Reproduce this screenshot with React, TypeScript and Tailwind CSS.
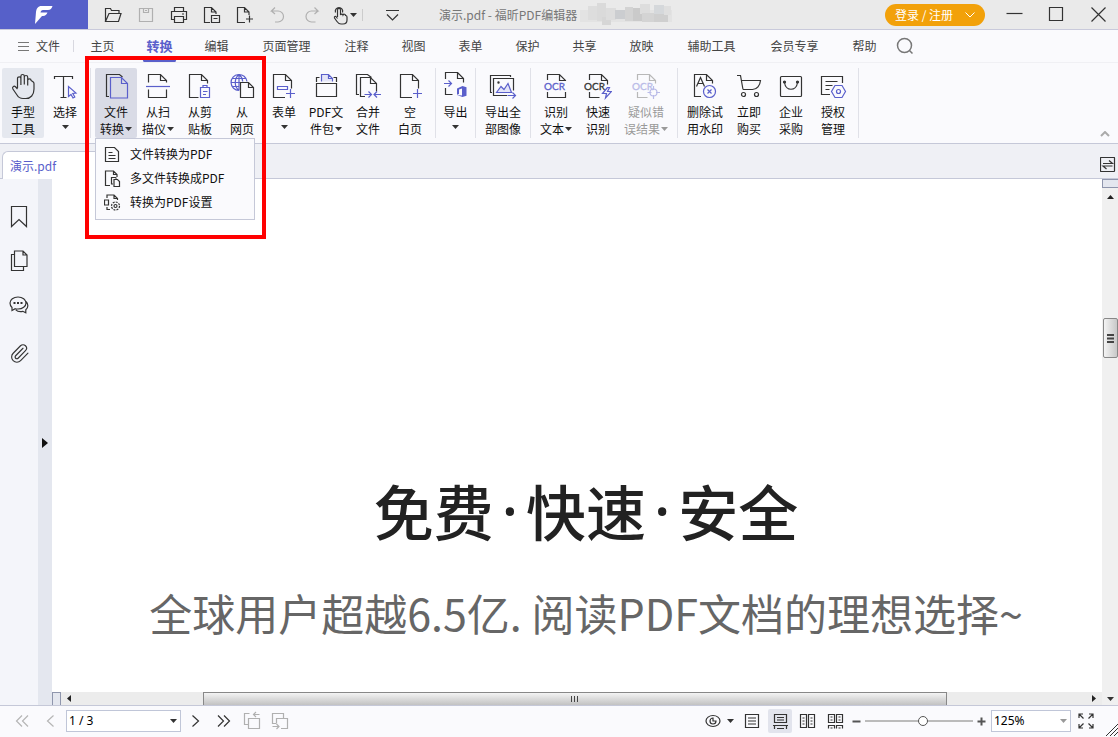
import { Paperclip } from "lucide-react";
import type { ReactNode } from "react";

const INK = "#333333";
const BLUE = "#5a5fcb";

type IconProps = {
  size?: number;
  color?: string;
  className?: string;
  children: ReactNode;
};

function Icon({ size = 28, color = INK, className = "", children }: IconProps) {
  return (
    <svg
      width={size}
      height={size}
      viewBox={`0 0 ${size} ${size}`}
      fill="none"
      stroke={color}
      strokeWidth="1.2"
      className={`shrink-0 ${className}`}
      aria-hidden="true"
    >
      {children}
    </svg>
  );
}

function Caret({ className = "text-[#333333]" }: { className?: string }) {
  return (
    <svg width="7" height="4" viewBox="0 0 7 4" className={`shrink-0 ${className}`} aria-hidden="true">
      <path d="M0 0h7L3.5 4z" fill="currentColor" />
    </svg>
  );
}

const titleTools = [
  {
    name: "打开",
    color: INK,
    art: <path d="M2.5 17.5v-13h5l1 2h7.500v3M2.500 17.500l3.500-8h12l-2.500 8z" />,
  },
  {
    name: "保存",
    color: "#b0b0b0",
    art: <path d="M3.500 4.500h13v13h-13zM7.500 4.500v4h5v-4M9 6.500h2" />,
  },
  {
    name: "打印",
    color: INK,
    art: <path d="M5.500 7.500v-4h9v4M5.500 15.500h-3v-8h15v8h-3M5.500 12.500h9v6h-9zM13 10h2" />,
  },
  {
    name: "另存",
    color: INK,
    art: <path d="M8 18.500H2.500v-15h7l4.500 4.500v2M9.500 3.500v4.500H14M9.500 11.500h8v7h-8zM11.500 14.500h4" />,
  },
  {
    name: "新建",
    color: INK,
    art: <path d="M10 18.500H2.500v-15h7l4.500 4.500v3M9.500 3.500v4.500H14M14.500 11.500v7M11 15h7" />,
  },
  {
    name: "撤销",
    color: "#b0b0b0",
    art: <path d="M7 3.500L3.500 7H10a5.500 5.500 0 0 1 0 11H7M3.500 7L7 10" />,
  },
  {
    name: "重做",
    color: "#b0b0b0",
    art: <path d="M13.500 3.500L17 7h-6.500a5.500 5.500 0 0 0 0 11h4M17 7l-3.500 3" />,
  },
];

// pixelated licence name after the window title
const mosaic = [
  [0, 8, 92, 12, "#e3e3e3"], [8, 4, 9, 14, "#dddddd"], [17, 1, 9, 18, "#dadada"], [22, 15, 9, 8, "#d6d6d6"],
  [26, 6, 10, 12, "#dddddd"], [35, 8, 12, 9, "#cbcdd0"], [45, 5, 8, 14, "#d3d3d3"], [53, 6, 9, 13, "#cacaca"],
  [60, 2, 10, 10, "#dddddd"], [62, 11, 12, 9, "#d4d4d4"], [74, 3, 10, 11, "#d5d8db"], [74, 12, 14, 8, "#cfcfcf"],
  [84, 4, 7, 9, "#dfdfdf"],
] as const;

function TitleBar() {
  return (
    <header className="flex h-[30px] shrink-0 items-center border-b border-[#c9cadb] bg-[#eaeaea]">
      <div className="flex h-full w-[88px] items-center justify-center bg-[#5660c9]">
        <svg width="20" height="20" viewBox="0 0 20 20" fill="#ffffff" role="img" aria-label="福昕">
          <path d="M1 19L2 7C2.500 3.500 4 1 7.500 1H18.500c-.800 2.500-2 4-4.500 4H9C7.500 5 6.800 6 6.500 7.500L13.500 7.500c-1 2.300-2.200 3.500-4.500 3.500H8z" />
        </svg>
      </div>
      <div className="flex items-center gap-3 pl-[15px]">
        {titleTools.map((t) => (
          <button key={t.name} aria-label={t.name}>
            <Icon size={21} color={t.color} className="block">{t.art}</Icon>
          </button>
        ))}
      </div>
      <button className="ml-2 flex items-center" aria-label="手型">
        <Icon size={20}>
          <path d="M7.500 12V5a1.500 1.500 0 0 1 3 0v5a1.300 1.300 0 0 1 2.500 0 1.300 1.300 0 0 1 2.500.500c1 0 1.500.500 1.500 1.500v3c0 2.500-1.500 4-4 4h-2c-2 0-3-1-4-2.500L4.500 13c-.500-1.500 1-2 1.800-1L7.500 13.500M5.500 7.500a3.700 3.700 0 1 1 7 0" />
        </Icon>
        <Caret />
      </button>
      <div className="ml-[5px] h-3 w-px bg-[#cccccc]" />
      <button className="ml-[19px]" aria-label="自定义快速访问">
        <Icon size={21} className="block"><path d="M4 6.500h13M5 10.500l5.500 5.500 5.500-5.500" /></Icon>
      </button>
      <h1 className="ml-9 text-xs text-[#777777]">演示.pdf - 福昕PDF编辑器</h1>
      <svg width="92" height="26" viewBox="0 0 92 26" className="ml-[3px]" aria-hidden="true">
        {mosaic.map(([x, y, w, h, fill]) => (
          <rect key={`${x}-${y}`} x={x} y={y} width={w} height={h} fill={fill} />
        ))}
      </svg>
      <button className="ml-auto flex h-[22px] w-[100px] items-center justify-between rounded-full bg-[#f2a10a] px-2.5 text-xs text-white">
        登录 / 注册
        <svg width="10" height="6" viewBox="0 0 10 6" fill="none" stroke="#ffffff" aria-hidden="true">
          <path d="M.500.500L5 5 9.500.500" />
        </svg>
      </button>
      <div className="flex items-center gap-[21px] pr-[9px] pl-[19px]">
        <button aria-label="最小化"><Icon size={21} className="block"><path d="M2.500 9.500h16" /></Icon></button>
        <button aria-label="最大化"><Icon size={21} className="block"><path d="M3.500 3.500h13v13h-13z" /></Icon></button>
        <button aria-label="关闭"><Icon size={21} className="block"><path d="M3.500 3.500l14 14M17.500 3.500l-14 14" /></Icon></button>
      </div>
    </header>
  );
}

const menus = ["主页", "转换", "编辑", "页面管理", "注释", "视图", "表单", "保护", "共享", "放映", "辅助工具", "会员专享", "帮助"];

function MenuBar() {
  return (
    <nav className="flex h-[33px] shrink-0 items-center border-b border-[#f0f0f4] text-xs text-[#444444]">
      <button className="flex w-[73px] items-center gap-[7px] pl-[18px]">
        <svg width="11" height="9" viewBox="0 0 11 9" stroke="#777777" aria-hidden="true">
          <path d="M0 .500h11M0 4.500h11M0 8.500h11" />
        </svg>
        文件
      </button>
      <div className="h-3 w-px bg-[#d8d8e0]" />
      {menus.map((m) => {
        const width = m.length > 2 ? "w-[83px]" : "w-[57px]";
        if (m === "转换") {
          return (
            <button key={m} className={`relative h-full ${width} text-[13px] font-bold text-[#5a5fcb]`}>
              {m}
              <span className="absolute inset-x-3 bottom-0 h-[3px] rounded-full bg-[#5a5fcb]" />
            </button>
          );
        }
        return <button key={m} className={`h-full ${width}`}>{m}</button>;
      })}
      <button className="ml-[3px]" aria-label="搜索">
        <Icon size={18} color="#777777" className="block">
          <circle cx="8.500" cy="8.500" r="7" strokeWidth="1.500" />
          <path d="M13.500 13.500l3 3" strokeWidth="1.500" />
        </Icon>
      </button>
    </nav>
  );
}

function Ocr({ x, color }: { x: number; color: string }) {
  return (
    <text x={x} y="18" fontFamily="Lato" fontSize="10" fontWeight="400" fill={color} stroke={color} strokeWidth=".3">
      OCR
    </text>
  );
}

type Tool = {
  top: string;
  bottom?: string;
  caret?: boolean;
  width?: string;
  state?: "on" | "open" | "off";
  art: ReactNode;
};

const groups: Tool[][] = [
  [
    {
      top: "手型",
      bottom: "工具",
      state: "on",
      art: (
        <path d="M8.500 16V6.500a1.700 1.700 0 0 1 3.400 0V13M11.900 12V4.200a1.700 1.700 0 0 1 3.400 0V12.500M15.300 12.500V5.200a1.700 1.700 0 0 1 3.400 0V13.500M18.700 13.500V8.500a1.700 1.700 0 0 1 3.400 0l2.200 1.500c.800.600.700 1.300.700 2v5c0 6-3.500 9.500-8 9.500h-3c-3 0-4.500-1-6-3.500L3.900 17c-1-2 1-3.600 2.600-2.200L8.500 17" />
      ),
    },
    {
      top: "选择",
      caret: true,
      art: (
        <>
          <path d="M3.500 7V4.500h18V7M12.500 4.500v21M9.500 25.500h6" />
          <path d="M17.500 14.500v10l2.500-2 2 3.500 1.800-1-2-3.500 3.200-.500z" stroke={BLUE} />
        </>
      ),
    },
  ],
  [
    {
      top: "文件",
      bottom: "转换",
      caret: true,
      state: "open",
      art: (
        <>
          <path d="M7 24.500H4.500v-22h13l3 2.500" />
          <path d="M8.500 5.500h11l6 6v14.500h-17zM19.500 5.500v6h6" stroke={BLUE} />
        </>
      ),
    },
    {
      top: "从扫",
      bottom: "描仪",
      caret: true,
      art: (
        <>
          <path d="M4.500 10.500v-8h12l6 6v2M16.500 2.500v6h6M4.500 17.500v8h18v-8" />
          <path d="M2 14.500h24" stroke={BLUE} />
        </>
      ),
    },
    {
      top: "从剪",
      bottom: "贴板",
      art: (
        <>
          <path d="M12.500 25.500h-9v-23h12l6 6v3M15.500 2.500v6h6" />
          <path d="M14.500 15.500h9v10h-9zM17 15.500v-2h4v2M17 19.500h4.500M17 22.500h3" stroke={BLUE} />
        </>
      ),
    },
    {
      top: "从",
      bottom: "网页",
      art: (
        <>
          <path
            d="M11 18.500a8 8 0 1 1 8-9M11 2.500v16M3 10.500h9M4.500 6.500h13.500M4.500 14.500h7M11 2.500c-5 4-5 12 0 16M11 2.500c2.500 2 3.500 4 3.700 7"
            stroke={BLUE}
          />
          <path d="M12.500 10.500h8l5 5v10h-13zM20.500 10.500v5h5" />
        </>
      ),
    },
    {
      top: "表单",
      caret: true,
      art: (
        <>
          <path d="M15 25.500H3.500v-23h12l6 6v8M15.500 2.500v6h6" />
          <path d="M7.500 14.500h10v3h-10zM20.500 17v9M16 21.500h9" stroke={BLUE} />
        </>
      ),
    },
    {
      top: "PDF文",
      bottom: "件包",
      caret: true,
      art: (
        <>
          <path d="M4.500 11.500h20v13h-20zM4.500 10V5.500h3M21.500 5.500h3V10" />
          <path d="M9.500 9.500v-7h7l4 4v3M16.500 2.500v4h4" stroke={BLUE} fill="#e4e5f8" />
        </>
      ),
    },
    {
      top: "合并",
      bottom: "文件",
      art: (
        <>
          <path d="M5 22.500H2.500v-20h11l4 3M11 24.500H6.500v-19h10l6 6v8M16.500 5.500v6h6" />
          <path d="M10.500 22.500h7M14.500 19.500l3 3-3 3M27 22.500h-7M23 19.500l-3 3 3 3" stroke={BLUE} />
        </>
      ),
    },
    {
      top: "空",
      bottom: "白页",
      art: (
        <>
          <path d="M16 25.500H4.500v-23h12l6 6v8M16.500 2.500v6h6" />
          <path d="M21.500 17v9M17 21.500h9" stroke={BLUE} />
        </>
      ),
    },
  ],
  [
    {
      top: "导出",
      caret: true,
      width: "w-[31px]",
      art: (
        <>
          <path d="M3.500 7V.500h12l6 6v4M15.500.500v6h6M3.500 16v6.500h7" />
          <path d="M2 11.500h7.500M6.500 8.500l3 3-3 3" stroke={BLUE} />
          <path d="M15 16.500L20.500 14l4 1.300v8.400l-4 1.300-5.500-2 5 .500V16.500l-3 1v4.500l-2 .800z" fill={BLUE} stroke="none" />
        </>
      ),
    },
  ],
  [
    {
      top: "导出全",
      bottom: "部图像",
      width: "w-[46px]",
      art: (
        <>
          <path d="M3 20.500H1.500v-17h20V5M18 23.500H4.500v-17h20v12" />
          <path d="M7.500 20.500l4.500-6 3 3 4-6 3.500 9z" stroke={BLUE} fill="#e4e5f8" />
          <circle cx="9.500" cy="10.500" r=".6" />
          <path d="M18.500 23.500h8M23.500 20.500l3 3-3 3" stroke={BLUE} />
        </>
      ),
    },
  ],
  [
    {
      top: "识别",
      bottom: "文本",
      caret: true,
      art: (
        <>
          <path d="M5.500 8V2.500h12l6 6V9M17.500 2.500v6h6M5.500 20v5.500h18V20" />
          <Ocr x={2} color={BLUE} />
        </>
      ),
    },
    {
      top: "快速",
      bottom: "识别",
      art: (
        <>
          <path d="M5.500 8V2.500h12l6 6v4M17.500 2.500v6h6M5.500 20v5.500h10" />
          <Ocr x={0} color={INK} />
          <path d="M23.500 15.500l-5 6h4l-1 4.500 6-6.500h-4l2-4z" stroke={BLUE} />
        </>
      ),
    },
    {
      top: "疑似错",
      bottom: "误结果",
      caret: true,
      width: "w-[54px]",
      state: "off",
      art: (
        <>
          <path d="M5.500 8V2.500h12l6 6v3M17.500 2.500v6h6M5.500 20v5.500h10" stroke="#b8b8b8" />
          <Ocr x={0} color="#b9bbe8" />
          <g stroke="#b9bbe8">
            <circle cx="21.500" cy="20.500" r="3.500" />
            <path d="M21.500 14v4M21.500 23v4M15.500 20.500h4M24 20.500h4" />
          </g>
        </>
      ),
    },
  ],
  [
    {
      top: "删除试",
      bottom: "用水印",
      width: "w-[46px]",
      art: (
        <>
          <path d="M10 24.500H3.500v-22h12l6 6v3M15.500 2.500v6h6" />
          <path d="M5.500 14.500L9.500 5.500l4 9M7 11.500h5" />
          <circle cx="18.500" cy="19.500" r="6" stroke={BLUE} />
          <path d="M16.500 17.500l4 4M20.500 17.500l-4 4" stroke={BLUE} />
        </>
      ),
    },
    {
      top: "立即",
      bottom: "购买",
      art: (
        <>
          <path d="M2 3.500h3.500L8 17.500M6.500 8.500h19c-.500 5-3.500 9-8 9H8" />
          <circle cx="8.500" cy="22.500" r="2" />
          <circle cx="21.500" cy="22.500" r="2" />
        </>
      ),
    },
    {
      top: "企业",
      bottom: "采购",
      art: (
        <>
          <rect x="3.500" y="4.500" width="21" height="20" rx="1" />
          <path d="M7.500 10.500c1 9 12 9 13 0" />
          <circle cx="7.500" cy="10" r="1" fill={INK} />
          <circle cx="20.500" cy="10" r="1" fill={INK} />
        </>
      ),
    },
    {
      top: "授权",
      bottom: "管理",
      art: (
        <>
          <path d="M11 22.500H2.500v-18h21V11M6.500 9.500h12M6.500 13.500h7M6.500 17.500h4" />
          <path d="M16 13.500h7l3.500 6-3.500 6h-7l-3.500-6z" stroke={BLUE} />
          <circle cx="19.500" cy="19.500" r="2" stroke={BLUE} />
        </>
      ),
    },
  ],
];

const convertMenu = [
  {
    label: "文件转换为PDF",
    art: <path d="M1.500 1.500h9l4 4v10h-13zM4.500 6.500h4M4.500 9.500h7M4.500 12.500h7" />,
  },
  {
    label: "多文件转换成PDF",
    art: <path d="M6 15.500H1.500V1h8l3.500 3.500V7M9.500 1v3.500H13M9 14H7.500V7.500h4l1 1M10 9.500h3.500l2 2v5H10z" />,
  },
  {
    label: "转换为PDF设置",
    art: (
      <>
        <path d="M3 4V1h7l3.500 3.500V6M10 1v3.500h3.500M.500 6h4v5h-4zM3 13v2.500h3" />
        <circle cx="11.500" cy="12" r="4" strokeDasharray="2 1.100" />
        <circle cx="11.500" cy="12" r="1.500" />
      </>
    ),
  },
];

const toolState = {
  on: "bg-[#e5e8ef]",
  open: "bg-[#d9dbe6]",
  off: "text-[#9a9a9a]",
};

function ToolButton({ tool }: { tool: Tool }) {
  const caretColor = tool.state === "off" ? "text-[#9a9a9a]" : "text-[#333333]";
  return (
    <button
      className={`flex h-[70px] flex-col items-center rounded-xs pt-1 text-xs leading-[17px] whitespace-nowrap ${tool.width ?? "w-[42px]"} ${tool.state ? toolState[tool.state] : ""}`}
    >
      <Icon className="mb-[3px]">{tool.art}</Icon>
      <span>{tool.top}</span>
      {tool.bottom ? (
        <span className="flex items-center gap-px">
          {tool.bottom}
          {tool.caret && <Caret className={caretColor} />}
        </span>
      ) : (
        <span className="flex h-3.5 items-center">
          <Caret />
        </span>
      )}
    </button>
  );
}

function Ribbon() {
  return (
    <section className="flex h-[81px] shrink-0 items-start border-b border-[#c5c8d8] pt-[5px] text-[#111111]">
      {groups.map((group, i) => (
        <div key={i} className={`flex border-r border-[#e0e1e8] pr-1 ${i === 0 ? "pl-0.5" : "pl-1"}`}>
          {group.map((tool) =>
            tool.state === "open" ? (
              <div key={tool.top} className="relative">
                <ToolButton tool={tool} />
                <ul className="absolute top-full left-0 z-10 w-40 border border-[#c5c8d8] bg-[#fafafd] pt-[3px] pb-[5px]">
                  {convertMenu.map((item) => (
                    <li key={item.label}>
                      <button className="flex h-6 w-full items-center gap-[9px] pl-2 text-xs">
                        <Icon size={17}>{item.art}</Icon>
                        {item.label}
                      </button>
                    </li>
                  ))}
                </ul>
                {/* callout frame round the convert tools and their menu */}
                <div className="pointer-events-none absolute -top-3 -left-2.5 z-20 h-[183px] w-[181px] border-4 border-[#ff0000]" />
              </div>
            ) : (
              <ToolButton key={tool.top} tool={tool} />
            ),
          )}
        </div>
      ))}
      <button className="mr-2 mb-1.5 ml-auto self-end" aria-label="收起功能区">
        <svg width="10" height="6" viewBox="0 0 10 6" fill="none" stroke="#aaaaaa" strokeWidth="2" className="block" aria-hidden="true">
          <path d="M1 5l4-4 4 4" />
        </svg>
      </button>
    </section>
  );
}

function DocumentTabs() {
  return (
    <div className="flex h-[35px] shrink-0 items-end border-b border-[#c5c8d8] bg-[#eff0f5] pl-0.5">
      <a href="#doc" className="-mb-px flex h-[28px] w-[120px] items-center rounded-tl-md border-t border-l border-[#c5c8d8] bg-white pl-[7px] text-xs text-[#5a5fcb]">
        演示.pdf
      </a>
      <button className="mr-0.5 mb-[5px] ml-auto" aria-label="切换视图">
        <Icon size={16} className="block">
          <rect x=".5" y=".5" width="14" height="14" rx=".5" />
          <path d="M3 6.500h9.500L9 3.500M12.500 9H3l3.500 3" />
        </Icon>
      </button>
    </div>
  );
}

function SidePanel() {
  return (
    <aside className="flex shrink-0">
      <div className="flex w-[38px] flex-col items-center bg-[#f4f5fa] pt-4">
        <button aria-label="书签" className="h-11">
          <Icon size={22}><path d="M3.500.500h15v20L11 13.500l-7.500 7z" /></Icon>
        </button>
        <button aria-label="页面" className="h-11">
          <Icon size={22}><path d="M6.500 1h8.500l4 4v11.500H6.500zM15 1v4h4M6.500 4.500h-3v16h12v-4" /></Icon>
        </button>
        <button aria-label="注释" className="h-12">
          <Icon size={22}>
            <path d="M10 1c4.500 0 8 2.600 8 6s-3.500 6-8 6c-1 0-2 0-2.800-.300L4 14.500V11.500C2.700 10.300 2 8.700 2 7c0-3.400 3.500-6 8-6zM18 5.500c2.500 2.500 2.500 6-.200 8.300v3l-3-1.500c-3 .600-5.500 0-7-1.500" />
            <path d="M5.500 7h2M9 7h2M12.500 7h2" strokeWidth="2" />
          </Icon>
        </button>
        <button aria-label="附件" className="h-11">
          <Paperclip size={21} strokeWidth={1.3} color={INK} />
        </button>
      </div>
      <button className="flex w-3.5 items-center justify-center bg-[#e4e7ef] pt-0.5" aria-label="展开面板">
        <svg width="6" height="10" viewBox="0 0 6 10" fill="#111111" aria-hidden="true"><path d="M0 0l6 5-6 5z" /></svg>
      </button>
    </aside>
  );
}

function Dot() {
  return <span className="mx-2 font-['Noto_Sans']">·</span>;
}

function DocumentView() {
  return (
    <div className="flex min-w-0 flex-1">
      <div className="flex min-w-0 flex-1 flex-col">
        <main id="doc" className="flex min-h-0 flex-1 flex-col items-center overflow-hidden bg-white pt-[295px] pl-[18px] whitespace-nowrap">
          <h2 className="flex h-[72px] items-center text-[60px] leading-[72px] font-medium text-[#222222]">
            免费<Dot />快速<Dot />安全
          </h2>
          <p className="mt-9 text-[43px] leading-[60px] text-[#666666]">全球用户超越6.5亿. 阅读PDF文档的理想选择~</p>
        </main>
        <div className="flex h-[13px] shrink-0 items-stretch bg-[#ececec]">
          <div className="w-[9px] border border-b-0 border-[#8f96ad] bg-[#e4e7ef]" />
          <div className="flex w-[142px] items-center pl-1.5">
            <svg width="4" height="7" viewBox="0 0 4 7" fill="#222222" aria-hidden="true"><path d="M4 0v7L0 3.500z" /></svg>
          </div>
          <div className="flex flex-1 items-center justify-center border border-b-0 border-[#888888] bg-linear-to-b from-[#f4f4f4] to-[#c2c2c2]">
            <svg width="8" height="6" viewBox="0 0 8 6" stroke="#444444" aria-hidden="true"><path d="M.500 0v6M3.500 0v6M6.500 0v6" /></svg>
          </div>
          <div className="flex w-[155px] items-center justify-end pr-1.5">
            <svg width="4" height="7" viewBox="0 0 4 7" fill="#222222" aria-hidden="true"><path d="M0 0v7l4-3.500z" /></svg>
          </div>
        </div>
      </div>
      <div className="flex w-4 shrink-0 flex-col bg-[#f0f0f0]">
        <div className="h-[9px] border border-r-0 border-[#8f96ad] bg-[#e4e7ef]" />
        <div className="flex h-[130px] items-start justify-center pt-[7px]">
          <svg width="7" height="4" viewBox="0 0 7 4" fill="#222222" aria-hidden="true"><path d="M0 4h7L3.500 0z" /></svg>
        </div>
        <div className="ml-px flex h-10 items-center justify-center rounded-xs border border-[#888888] bg-linear-to-r from-[#f4f4f4] to-[#c8c8c8]">
          <svg width="7" height="9" viewBox="0 0 7 9" stroke="#444444" strokeWidth="2" aria-hidden="true"><path d="M0 1h7M0 4.500h7M0 8h7" /></svg>
        </div>
        <div className="mt-auto flex justify-center pb-1"><Caret /></div>
      </div>
    </div>
  );
}

function StatusBar() {
  return (
    <footer className="flex h-8 shrink-0 items-center border-t border-[#c5c8d8] pb-px">
      <div className="flex items-center gap-2 pl-3">
        <button aria-label="第一页"><Icon size={20} color="#b5b5b5" className="block"><path d="M10 4.500L4.500 10l5.500 5.500M16 4.500L10.500 10l5.500 5.500" /></Icon></button>
        <button aria-label="上一页"><Icon size={20} color="#b5b5b5" className="block"><path d="M13.500 4.500L7.500 10l6 5.500" /></Icon></button>
      </div>
      <div className="relative ml-1.5 flex w-[115px] items-center">
        <select
          aria-label="页码"
          className="w-full appearance-none border border-[#c0c6d8] bg-white pl-0.5 font-['Noto_Sans'] text-xs leading-5 text-black outline-none"
          defaultValue="1"
        >
          <option value="1">1 / 3</option>
          <option value="2">2 / 3</option>
          <option value="3">3 / 3</option>
        </select>
        <span className="pointer-events-none absolute right-1"><Caret /></span>
      </div>
      <div className="flex items-center gap-2 pl-[5px]">
        <button aria-label="下一页"><Icon size={20} className="block"><path d="M6.500 4.500l6 5.500-6 5.500" /></Icon></button>
        <button aria-label="最后一页"><Icon size={20} className="block"><path d="M4 4.500l5.500 5.500L4 15.500M10 4.500l5.500 5.500-5.500 5.500" /></Icon></button>
        <button aria-label="上一视图"><Icon size={20} color="#b0b0b0" className="block"><path d="M6.500 7.500h11v10h-11zM6 13.500H2.500v-11h5M17.500 3.500h-6M14 1l-2.500 2.500L14 6" /></Icon></button>
        <button aria-label="下一视图"><Icon size={20} color="#b0b0b0" className="block"><path d="M6 12.500H2.500v-10h11v5M6.500 12.500v-5h11v10H11M2.500 15.500H9M6.500 13L9 15.500 6.500 18" /></Icon></button>
      </div>
      <div className="ml-auto flex items-center gap-1 pr-[23px]">
        <button className="mr-0.5 flex items-center gap-1.5" aria-label="阅读模式">
          <Icon size={16}>
            <ellipse cx="8" cy="8" rx="7" ry="5.500" />
            <path d="M8 5a3 3 0 1 0 3 3H8z" />
          </Icon>
          <Caret />
        </button>
        <button className="p-0.5" aria-label="单页"><Icon size={20} className="block"><path d="M3.500 3.500h13v13h-13zM6 7h8M6 10h8M6 13h8" /></Icon></button>
        <button className="rounded-xs bg-[#e2e4ed] p-0.5" aria-label="连续"><Icon size={20} className="block"><path d="M4.500 3.500h12v8h-12zM7 6.500h7M7 9h7M3 14.500h15M4.500 14.500V18M16.500 14.500V18M7 17.500h7" /></Icon></button>
        <button className="p-0.5" aria-label="双页"><Icon size={20} className="block"><path d="M2.500 3.500h6v13h-6zM10.500 3.500h6v13h-6zM4.500 7h2M4.500 10h2M4.500 13h2M12.500 7h2M12.500 10h2M12.500 13h2" /></Icon></button>
        <button className="p-0.5" aria-label="双页连续"><Icon size={20} className="block"><path d="M2.500 3.500h6v8h-6zM10.500 3.500h6v8h-6zM4.500 6h2M4.500 9h2M12.500 6h2M12.500 9h2M2.500 17.500v-3h6v3M10.500 17.500v-3h6v3M4.500 17h2M12.500 17h2" /></Icon></button>
        <button aria-label="缩小"><Icon size={9} color="#555555" className="block"><path d="M.500 4.500h8" strokeWidth="2" /></Icon></button>
        <input
          type="range"
          aria-label="缩放"
          min={0}
          max={100}
          defaultValue={54}
          className="h-3 w-[108px] appearance-none bg-transparent [&::-webkit-slider-runnable-track]:h-0.5 [&::-webkit-slider-runnable-track]:bg-[#bbbbbb] [&::-webkit-slider-thumb]:-mt-1 [&::-webkit-slider-thumb]:size-2.5 [&::-webkit-slider-thumb]:appearance-none [&::-webkit-slider-thumb]:rounded-full [&::-webkit-slider-thumb]:border [&::-webkit-slider-thumb]:border-[#555555] [&::-webkit-slider-thumb]:bg-white"
        />
        <button aria-label="放大"><Icon size={9} color="#555555" className="block"><path d="M.500 4.500h8M4.500.500v8" strokeWidth="2" /></Icon></button>
        <div className="relative ml-px flex w-20 items-center">
          <select
            aria-label="缩放比例"
            className="w-full appearance-none border border-[#c0c6d8] bg-white pl-0.5 font-['Noto_Sans'] text-xs leading-5 text-black outline-none"
            defaultValue="125%"
          >
            <option>100%</option>
            <option>125%</option>
            <option>150%</option>
          </select>
          <span className="pointer-events-none absolute right-1"><Caret className="text-[#999999]" /></span>
        </div>
        <button className="ml-0.5" aria-label="全屏">
          <Icon size={18} className="block">
            <path d="M2 6V2h4M2 2l4.500 4.500M12 2h4v4M16 2l-4.500 4.500M2 12v4h4M2 16l4.500-4.500M16 12v4h-4M16 16l-4.500-4.500" />
          </Icon>
        </button>
      </div>
      <svg width="12" height="12" viewBox="0 0 12 12" stroke="#333333" className="-ml-3 self-end" aria-hidden="true">
        <path d="M0 12L12 0M4 12l8-8M8 12l4-4" />
      </svg>
    </footer>
  );
}

export default function App() {
  return (
    <div lang="zh-CN" className="flex h-screen flex-col overflow-hidden bg-[#fafafd] font-['Noto_Sans_CJK_SC',sans-serif]">
      <TitleBar />
      <MenuBar />
      <Ribbon />
      <DocumentTabs />
      <div className="flex min-h-0 flex-1">
        <SidePanel />
        <DocumentView />
      </div>
      <StatusBar />
    </div>
  );
}
